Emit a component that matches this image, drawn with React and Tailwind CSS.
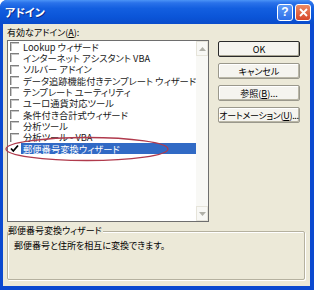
import React from "react";

const items = [
  "Lookup ウィザード",
  "インターネット アシスタント VBA",
  "ソルバー アドイン",
  "データ追跡機能付きテンプレート ウィザード",
  "テンプレート ユーティリティ",
  "ユーロ通貨対応ツール",
  "条件付き合計式ウィザード",
  "分析ツール",
  "分析ツール - VBA",
  "郵便番号変換ウィザード",
];

function Row({ label, checked }) {
  return (
    <div className="h-[11.33px] flex items-center">
      <div className="w-[13px] h-full flex items-center justify-start pl-[2px] shrink-0">
        {checked ? (
          <svg width="9" height="9" viewBox="0 0 9 9">
            <path d="M1 4.5 L3.3 7 L8 1.5" fill="none" stroke="#000" strokeWidth="1.8" />
          </svg>
        ) : (
          <div className="w-[9px] h-[9px] border-t border-l border-[#7e7e7e] shadow-[inset_1px_1px_0_#c8c8c8]" />
        )}
      </div>
      <div
        className={
          "h-full flex items-center pl-[2px] whitespace-nowrap text-[9.3px] leading-[10px] " +
          (checked ? "bg-[#316ac5] text-white w-[175px]" : "text-[#1a1a1a]")
        }
      >
        {label}
      </div>
    </div>
  );
}

function Btn({ children, def }) {
  return (
    <div
      className={
        "h-[16px] w-[82px] flex items-center justify-center whitespace-nowrap rounded-[2px] bg-[#f5f4ef] text-[9px] leading-[11px] text-black " +
        (def
          ? "border border-[#2a2a2a] shadow-[inset_-1px_-1px_0_#a8a593]"
          : "border border-[#9a988c] shadow-[inset_-1px_-1px_0_#b9b6a6,inset_1px_1px_0_#ffffff]")
      }
    >
      {children}
    </div>
  );
}

export default function App() {
  return (
    <div className="relative w-[314px] h-[290px] flex flex-col bg-[#0b49d0] rounded-t-[7px] overflow-hidden font-['Noto_Sans_CJK_JP','Noto_Sans',sans-serif] [font-feature-settings:'palt']">
      {/* Title bar */}
      <div className="h-[24px] shrink-0 flex items-center pl-[5px] pr-[3px] bg-[linear-gradient(180deg,#4b94f7_0%,#2a72ea_12%,#135fe0_35%,#0b55d8_70%,#0a4ccb_100%)]">
        <span className="text-white font-bold text-[11px] leading-none [text-shadow:1px_1px_0_#0a2a8a]">アドイン</span>
        <div className="ml-auto flex gap-[2px]">
          <div className="w-[16px] h-[17px] rounded-[3px] border border-white bg-[linear-gradient(180deg,#5f9cf8,#2e6fe8)] flex items-center justify-center text-white text-[12px] font-bold leading-none font-['Liberation_Sans',sans-serif]">
            ?
          </div>
          <div className="w-[16px] h-[17px] rounded-[3px] border border-white bg-[linear-gradient(180deg,#ec8a64,#d6472a)] flex items-center justify-center">
            <svg width="9" height="9" viewBox="0 0 9 9">
              <path d="M1 1 L8 8 M8 1 L1 8" stroke="#fff" strokeWidth="1.8" />
            </svg>
          </div>
        </div>
      </div>

      {/* Body */}
      <div className="h-[262px] shrink-0 ml-[3px] mr-[4px] bg-[#ece9d8] flex flex-col text-[9px]">
        <div className="ml-[4px] mt-[2px] h-[12px] shrink-0 flex items-center leading-[11px] text-black">
          有効なアドイン(<span className="underline">A</span>):
        </div>

        <div className="flex ml-[4px] mt-[2px] h-[182px] shrink-0">
          {/* List box */}
          <div className="w-[202px] h-[182px] border border-[#6e6e6e] bg-white flex shrink-0">
            <div className="flex-1 flex flex-col">
              {items.map((t, i) => (
                <Row key={t} label={t} checked={i === items.length - 1} />
              ))}
            </div>
            <div className="w-[15px] bg-[#f8f8f5] flex flex-col justify-between">
              <div className="h-[15px] border border-[#e6e4da] flex items-center justify-center">
                <svg width="7" height="4" viewBox="0 0 7 4">
                  <path d="M0 4 L3.5 0 L7 4 Z" fill="#b0b0a8" />
                </svg>
              </div>
              <div className="h-[15px] border border-[#e6e4da] flex items-center justify-center">
                <svg width="7" height="4" viewBox="0 0 7 4">
                  <path d="M0 0 L3.5 4 L7 0 Z" fill="#b0b0a8" />
                </svg>
              </div>
            </div>
          </div>

          {/* Buttons */}
          <div className="ml-[9px] mt-[1px] flex flex-col gap-[6px]">
            <Btn def>OK</Btn>
            <Btn>キャンセル</Btn>
            <Btn>
              参照(<span className="underline">B</span>)...
            </Btn>
            <Btn>
              <span className="tracking-[-0.3px]">
                オートメーション(<span className="underline">U</span>)...
              </span>
            </Btn>
          </div>
        </div>

        {/* Group box */}
        <div className="relative ml-[4px] mt-[9px] w-[298px] h-[49px] shrink-0 border border-[#b5b19f] rounded-[2px] shadow-[inset_1px_1px_0_#ffffff,1px_1px_0_#ffffff]">
          <div className="absolute left-[0px] top-[-8px] bg-[#ece9d8] pr-[1px] h-[12px] flex items-center leading-[11px] text-black whitespace-nowrap">
            郵便番号変換ウィザード
          </div>
          <div className="pl-[6px] mt-[7px] h-[12px] flex items-center leading-[11px] text-black whitespace-nowrap">
            郵便番号と住所を相互に変換できます。
          </div>
        </div>
      </div>

      {/* Red annotation ellipse */}
      <svg className="absolute left-[4px] top-[136px] pointer-events-none" width="166" height="26" viewBox="0 0 166 26">
        <ellipse cx="83" cy="13" rx="81" ry="11.5" fill="none" stroke="#b03a4c" strokeWidth="1.3" />
      </svg>
    </div>
  );
}
